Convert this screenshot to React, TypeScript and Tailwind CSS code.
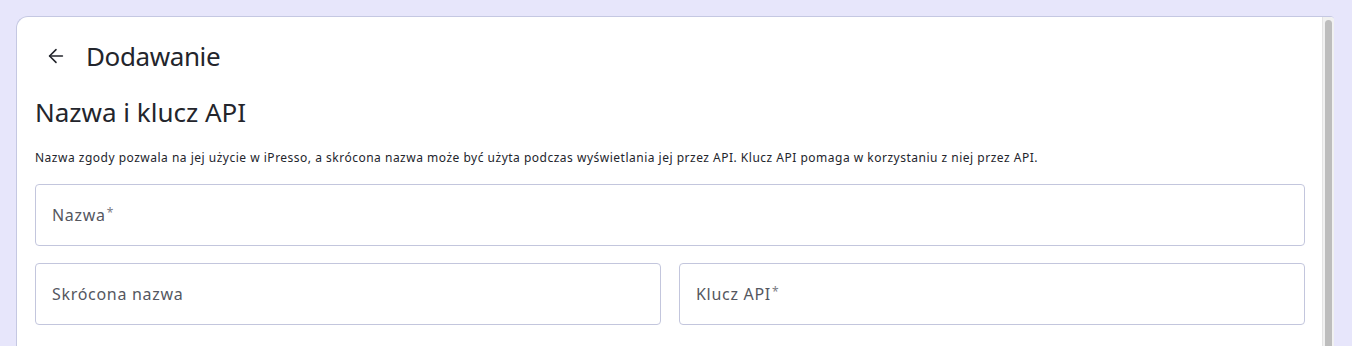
import { ArrowLeft } from "lucide-react";

const Field = ({ label, required }: { label: string; required?: boolean }) => (
  <div className="h-[62px] flex-1 rounded-[4px] border border-[#c3c6dd] bg-white flex items-center px-4">
    <span className="text-[16px] text-[#55575f] tracking-[0.7px]">
      {label}
      {required && <span className="text-[12px] text-[#7a7c84] align-top relative top-[1px] ml-[1px]">*</span>}
    </span>
  </div>
);

export default function App() {
  return (
    <div
      className="w-[1352px] h-[346px] bg-[#e7e6fb] pl-4 pt-4 pr-[18px] overflow-hidden"
      style={{ fontFamily: "'Noto Sans', sans-serif" }}
    >
      <div className="flex h-[340px] rounded-tl-[12px] rounded-tr-[4px] border-t border-l border-[#c5c8e2] bg-white overflow-hidden">
        <div className="flex-1 flex flex-col pl-[18px] pr-[17px]">
          <div className="flex items-center h-[78px] pl-[10px] gap-[19px] text-[#23252c]">
            <ArrowLeft size={22} strokeWidth={1.7} />
            <h1 className="text-[26px] leading-none tracking-[-0.4px]">Dodawanie</h1>
          </div>
          <h2 className="text-[26px] leading-none text-[#23252c] mt-[4px]">Nazwa i klucz API</h2>
          <p className="text-[12px] text-[#23252c] mt-[25px] leading-4 tracking-[0.5px]">
            Nazwa zgody pozwala na jej użycie w iPresso, a skrócona nazwa może być użyta podczas wyświetlania jej przez
            API. Klucz API pomaga w korzystaniu z niej przez API.
          </p>
          <div className="mt-[18px] flex">
            <Field label="Nazwa" required />
          </div>
          <div className="mt-[17px] flex gap-[18px]">
            <Field label="Skrócona nazwa" />
            <Field label="Klucz API" required />
          </div>
        </div>
        <div className="w-3 bg-[#f1f1f1] border-l border-[#e4e4e4] flex justify-center pt-[3px]">
          <div className="w-[7px] h-full rounded-t-full bg-[#bdbdbd]" />
        </div>
      </div>
    </div>
  );
}
